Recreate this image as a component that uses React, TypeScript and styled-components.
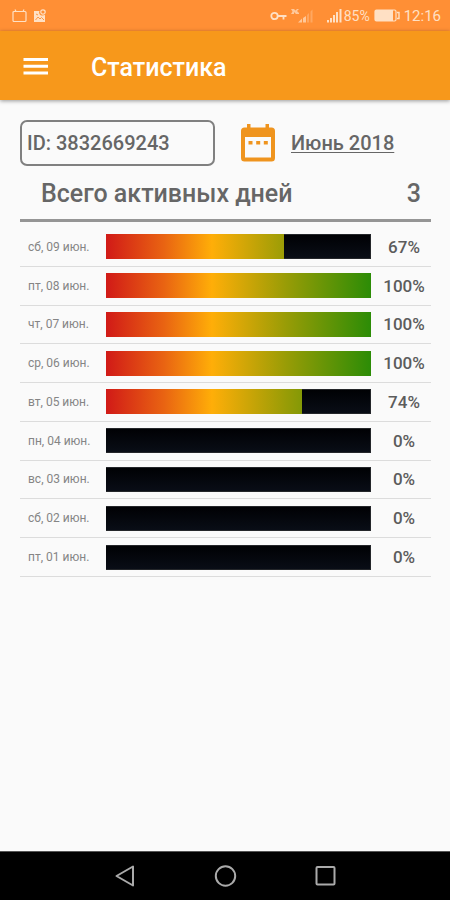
import React from "react";
import styled, { createGlobalStyle } from "styled-components";

const GlobalStyle = createGlobalStyle`
  *, *::before, *::after { box-sizing: border-box; }
  body {
    margin: 0;
    background: #fafafa;
    color: #666;
    font-family: Roboto, "Noto Sans", sans-serif;
  }
  button { margin: 0; padding: 0; border: 0; background: none; font: inherit; color: inherit; cursor: pointer; }
  svg { display: block; flex: none; }
`;

const Screen = styled.div`
  display: flex;
  flex-direction: column;
  min-height: 100vh;
`;

const StatusBar = styled.div`
  display: flex;
  align-items: center;
  justify-content: space-between;
  height: 31px;
  padding: 0 9px 0 12px;
  background: #ff8f35;
  color: #ffe0c4;
  font-size: 14px;
  line-height: 16px;
`;

const StatusGroup = styled.div<{ $gap: number }>`
  display: flex;
  align-items: center;
  gap: ${(p) => p.$gap}px;
`;

const Connection = styled(StatusGroup)`
  margin-right: 9px;
`;

const Clock = styled.time`
  font-size: 15px;
`;

const AppBar = styled.header`
  display: flex;
  align-items: center;
  gap: 42px;
  height: 69px;
  padding: 4px 22px 0;
  background: #f7981b;
  color: #fff;
  box-shadow: 0 1px 4px rgba(0, 0, 0, 0.4);
`;

const Title = styled.h1`
  margin: 0;
  font-size: 25px;
  line-height: 32px;
  font-weight: 500;
`;

const Main = styled.main`
  flex: 1;
  padding: 20px 19px 20px 20px;
`;

const Filters = styled.div`
  display: flex;
  align-items: center;
`;

const IdField = styled.input`
  flex: 0 1 195px;
  min-width: 0;
  height: 46px;
  padding: 0 5px;
  border: 2px solid #808080;
  border-radius: 7px;
  background: transparent;
  color: #666;
  font: 500 20px/24px Roboto, "Noto Sans", sans-serif;
  outline: 0;
`;

const MonthButton = styled.button`
  display: flex;
  align-items: center;
  gap: 15px;
  margin-left: 25px;
  font-size: 20px;
  line-height: 24px;
  font-weight: 500;
  white-space: nowrap;
`;

const MonthLabel = styled.span`
  text-decoration: underline;
  text-decoration-thickness: 1px;
  text-underline-offset: 2px;
  text-decoration-skip-ink: none;
`;

const Summary = styled.div`
  display: flex;
  justify-content: space-between;
  align-items: center;
  height: 56px;
  padding: 3px 10px 0 21px;
  border-bottom: 3px solid #959595;
  font-size: 25px;
  line-height: 32px;
  font-weight: 500;
`;

const Days = styled.table`
  width: 100%;
  height: 349px;
  margin-top: 6px;
  border-collapse: separate;
  border-spacing: 0;
  table-layout: fixed;
`;

const DateCell = styled.th`
  width: 86px;
  padding: 0 0 0 8px;
  border-bottom: 1px solid #dcdcdc;
  font-size: 12px;
  font-weight: 400;
  text-align: left;
  white-space: nowrap;
  color: #858585;
`;

const BarCell = styled.td`
  padding: 0;
  border-bottom: 1px solid #dcdcdc;
`;

const PercentCell = styled.td`
  width: 60px;
  padding: 0 0 0 6px;
  border-bottom: 1px solid #dcdcdc;
  font-size: 17px;
  font-weight: 500;
  text-align: center;
  color: #5c5c5c;
`;

const Track = styled.div`
  display: flex;
  justify-content: flex-end;
  height: 25px;
  background: linear-gradient(90deg, #d11a17 0%, #e96412 22%, #ffae08 40%, #989c06 68%, #2c8c06 100%);
`;

const Remainder = styled.div`
  background: linear-gradient(#000104, #090d16);
  border: 1px solid #24262a;
  border-left: 0;
`;

const NavBar = styled.nav`
  display: flex;
  justify-content: center;
  gap: 76px;
  height: 49px;
  background: #000;
  border-top: 1px solid #555;
`;

const NavButton = styled.button`
  display: flex;
  align-items: center;
`;

const days = [
  { date: "сб, 09 июн.", percent: 67 },
  { date: "пт, 08 июн.", percent: 100 },
  { date: "чт, 07 июн.", percent: 100 },
  { date: "ср, 06 июн.", percent: 100 },
  { date: "вт, 05 июн.", percent: 74 },
  { date: "пн, 04 июн.", percent: 0 },
  { date: "вс, 03 июн.", percent: 0 },
  { date: "сб, 02 июн.", percent: 0 },
  { date: "пт, 01 июн.", percent: 0 },
];

const ScreenIcon = () => (
  <svg width="16" height="14" viewBox="0 0 16 14" fill="none" stroke="currentColor" strokeWidth="1.2">
    <path d="M2 2.5h11a1 1 0 0 1 1 1v8a1 1 0 0 1-1 1H2a1 1 0 0 1-1-1v-8a1 1 0 0 1 1-1zM4 2.5 3 .5M11 2.5l1-2" />
  </svg>
);

const PictureIcon = () => (
  <svg width="13" height="14" viewBox="0 0 13 14">
    <path fill="currentColor" d="M1 2h5.500a3 3 0 0 0 3 4.500L12 6v7H1z" />
    <circle cx="10" cy="3" r="2.200" fill="none" stroke="currentColor" strokeWidth="1.200" />
    <path d="M2.500 11 5 8l2 2 1.500-1.500L11 11M3 5l2 1" fill="none" stroke="#ff8f35" strokeWidth="0.900" />
  </svg>
);

const KeyIcon = () => (
  <svg width="17" height="10" viewBox="0 0 17 10" fill="none" stroke="currentColor" strokeWidth="1.800">
    <circle cx="4.500" cy="5" r="3.200" />
    <path d="M7.700 5H16.500M13.500 5v3.500" />
  </svg>
);

const NoSignalIcon = () => (
  <svg width="23" height="16" viewBox="0 0 23 16" fill="currentColor">
    <path d="M0 1h3l1.500 1.500L6 1h2L6 3l2 2v1H5L3 4v2H0l1.500-2.500z" opacity="0.7" />
    <path d="M7 14.500l4-4v4zM12 10l3-2v6.500h-3z" opacity="0.7" />
    <path d="M16 7l2-2v9.500h-2zM19.500 3.500l2-2v13h-2z" opacity="0.3" />
  </svg>
);

const SignalIcon = () => (
  <svg width="15" height="15" viewBox="0 0 15 15" fill="currentColor">
    <path d="M0 12h2v2.500H0zM3 10h2v4.500H3zM6 7h2v7.500H6zM9 4h2v10.500H9zM12.500 1h2v13.500h-2z" />
  </svg>
);

const BatteryIcon = () => (
  <svg width="26" height="13" viewBox="0 0 26 13">
    <rect x="1" y="1" width="21" height="11" rx="1.500" fill="none" stroke="currentColor" strokeWidth="1.200" />
    <rect x="1" y="1" width="18" height="11" fill="currentColor" />
    <path d="M23 3.500h2v6h-2" fill="none" stroke="currentColor" strokeWidth="1.400" />
  </svg>
);

const MenuIcon = () => (
  <svg width="27" height="20" viewBox="0 0 27 20" fill="#fff">
    <path d="M1.500 0h24.500v3H1.500zM1.500 6.700h24.500v3H1.500zM1.500 13.400h24.500v3H1.500z" />
  </svg>
);

const CalendarIcon = () => (
  <svg width="36" height="40" viewBox="0 0 36 40">
    <path
      fill="#ef941e"
      fillRule="evenodd"
      d="M7 1h3.500v3.500h15V1H29v3.500h2.500a3.500 3.500 0 0 1 3.500 3.500v27a3.500 3.500 0 0 1-3.500 3.500h-27A3.500 3.500 0 0 1 1 35V8a3.500 3.500 0 0 1 3.500-3.500H7zM5 14v20.500h26V14z"
    />
    <path fill="#ef941e" d="M8.500 18h4v3.500h-4zM16.200 18h4v3.500h-4zM23.800 18h4v3.500h-4z" />
  </svg>
);

const BackIcon = () => (
  <svg width="24" height="24" viewBox="0 0 24 24" fill="none" stroke="#aaa" strokeWidth="2" strokeLinejoin="round">
    <path d="M20 2.500v19L3.500 12z" />
  </svg>
);

const HomeIcon = () => (
  <svg width="24" height="24" viewBox="0 0 24 24" fill="none" stroke="#aaa" strokeWidth="2">
    <circle cx="12.500" cy="12" r="9.700" />
  </svg>
);

const RecentIcon = () => (
  <svg width="24" height="24" viewBox="0 0 24 24" fill="none" stroke="#aaa" strokeWidth="2">
    <rect x="3.500" y="3" width="18" height="17.500" rx="1" />
  </svg>
);

export default function App() {
  return (
    <Screen>
      <GlobalStyle />
      <StatusBar>
        <StatusGroup $gap={5}>
          <ScreenIcon />
          <PictureIcon />
        </StatusGroup>
        <StatusGroup $gap={4}>
          <Connection $gap={4}>
            <KeyIcon />
            <NoSignalIcon />
          </Connection>
          <StatusGroup $gap={2}>
            <SignalIcon />
            <span>85%</span>
          </StatusGroup>
          <BatteryIcon />
          <Clock>12:16</Clock>
        </StatusGroup>
      </StatusBar>
      <AppBar>
        <button type="button" aria-label="Меню">
          <MenuIcon />
        </button>
        <Title>Статистика</Title>
      </AppBar>
      <Main>
        <Filters>
          <IdField type="text" aria-label="ID" readOnly value="ID: 3832669243" />
          <MonthButton type="button">
            <CalendarIcon />
            <MonthLabel>Июнь 2018</MonthLabel>
          </MonthButton>
        </Filters>
        <Summary>
          <span>Всего активных дней</span>
          <span>3</span>
        </Summary>
        <Days>
          <tbody>
            {days.map((day) => (
              <tr key={day.date}>
                <DateCell scope="row">{day.date}</DateCell>
                <BarCell>
                  <Track>
                    <Remainder style={{ width: `${100 - day.percent}%`, display: day.percent === 100 ? "none" : "block" }} />
                  </Track>
                </BarCell>
                <PercentCell>{day.percent}%</PercentCell>
              </tr>
            ))}
          </tbody>
        </Days>
      </Main>
      <NavBar>
        <NavButton type="button" aria-label="Назад">
          <BackIcon />
        </NavButton>
        <NavButton type="button" aria-label="Домой">
          <HomeIcon />
        </NavButton>
        <NavButton type="button" aria-label="Недавние">
          <RecentIcon />
        </NavButton>
      </NavBar>
    </Screen>
  );
}
